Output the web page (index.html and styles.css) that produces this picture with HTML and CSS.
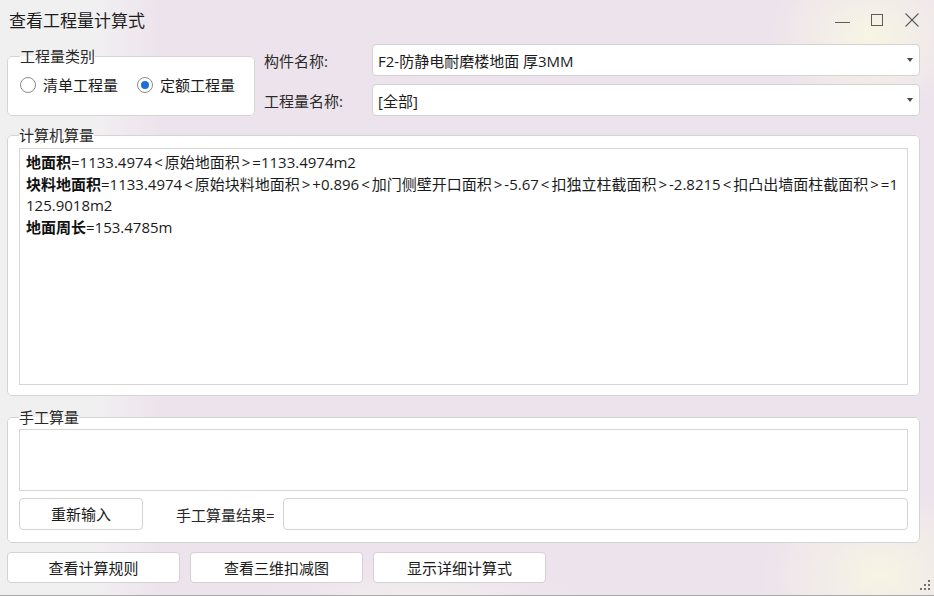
FILE: index.html
```html
<!DOCTYPE html>
<html lang="zh-CN">
<head>
<meta charset="utf-8">
<title>查看工程量计算式</title>
<link rel="stylesheet" href="styles.css">
</head>
<body>
<div class="window">
  <header class="titlebar">
    <span class="title">查看工程量计算式</span>
    <div class="controls">
      <svg class="ctl" width="16" height="16" viewBox="0 0 16 16"><line x1="1" y1="10.5" x2="16" y2="10.5" stroke="#5c5c5c" stroke-width="1"/></svg>
      <svg class="ctl" width="16" height="16" viewBox="0 0 16 16"><rect x="2.5" y="2.5" width="11" height="11" fill="none" stroke="#5c5c5c" stroke-width="1"/></svg>
      <svg class="ctl" width="16" height="16" viewBox="0 0 16 16"><path d="M1.5 1.5 L14.5 14.5 M14.5 1.5 L1.5 14.5" fill="none" stroke="#5c5c5c" stroke-width="1.1"/></svg>
    </div>
  </header>

  <div class="top">
    <fieldset class="group type">
      <legend>工程量类别</legend>
      <div class="radios">
        <span class="radio"><span class="dot"></span>清单工程量</span>
        <span class="radio checked"><span class="dot"></span>定额工程量</span>
      </div>
    </fieldset>
    <div class="fields">
      <div class="field">
        <span class="field-label">构件名称:</span>
        <div class="combo"><span>F2-防静电耐磨楼地面 厚3MM</span><span class="arrow"></span></div>
      </div>
      <div class="field">
        <span class="field-label">工程量名称:</span>
        <div class="combo"><span>[全部]</span><span class="arrow"></span></div>
      </div>
    </div>
  </div>

  <fieldset class="group calc">
    <legend>计算机算量</legend>
    <div class="output">
      <b>地面积</b>=1133.4974<span class="ang">&lt;</span>原始地面积<span class="ang">&gt;</span>=1133.4974m2<br>
      <b>块料地面积</b>=1133.4974<span class="ang">&lt;</span>原始块料地面积<span class="ang">&gt;</span>+0.896<span class="ang">&lt;</span>加门侧壁开口面积<span class="ang">&gt;</span>-5.67<span class="ang">&lt;</span>扣独立柱截面积<span class="ang">&gt;</span>-2.8215<span class="ang">&lt;</span>扣凸出墙面柱截面积<span class="ang">&gt;</span>=1<br>
      125.9018m2<br>
      <b>地面周长</b>=153.4785m
    </div>
  </fieldset>

  <fieldset class="group manual">
    <legend>手工算量</legend>
    <div class="manual-input"></div>
    <div class="manual-row">
      <button class="btn reset">重新输入</button>
      <span class="result-label">手工算量结果=</span>
      <div class="result-input"></div>
    </div>
  </fieldset>

  <div class="actions">
    <button class="btn action">查看计算规则</button>
    <button class="btn action">查看三维扣减图</button>
    <button class="btn action">显示详细计算式</button>
  </div>

  <svg class="grip" width="10" height="10" viewBox="0 0 10 10">
    <rect x="8" y="0" width="2" height="2" fill="#6f6f6f"/>
    <rect x="4" y="4" width="2" height="2" fill="#6f6f6f"/>
    <rect x="8" y="4" width="2" height="2" fill="#6f6f6f"/>
    <rect x="0" y="8" width="2" height="2" fill="#6f6f6f"/>
    <rect x="4" y="8" width="2" height="2" fill="#6f6f6f"/>
    <rect x="8" y="8" width="2" height="2" fill="#6f6f6f"/>
  </svg>
</div>
</body>
</html>
```

FILE: styles.css
```css
* { box-sizing: border-box; }

html, body {
  margin: 0;
  padding: 0;
}

body {
  width: 934px;
  height: 596px;
  overflow: hidden;
  font-family: "Open Sans", "Noto Sans CJK SC", sans-serif;
  font-size: 15px;
  color: #1b1b1b;
}

.window {
  position: relative;
  height: 596px;
  padding: 0 14px 0 7px;
  display: flex;
  flex-direction: column;
  border-bottom: 1px solid #a8a8a8;
  background:
    radial-gradient(ellipse 100px 80px at 870px 35px, rgba(248, 246, 228, 0.95), rgba(248, 246, 228, 0)),
    radial-gradient(ellipse 120px 90px at 880px 575px, rgba(247, 245, 228, 0.95), rgba(247, 245, 228, 0)),
    radial-gradient(ellipse 160px 40px at 420px 600px, rgba(243, 240, 238, 0.8), rgba(243, 240, 238, 0)),
    linear-gradient(to right, #f1f0f1 0px, #f1f0f1 95px, rgba(241, 240, 241, 0) 160px),
    #ede3ec;
}

.titlebar {
  height: 44px;
  display: flex;
  justify-content: space-between;
  align-items: flex-start;
}

.title {
  font-size: 17px;
  line-height: 24px;
  margin: 9px 0 0 2px;
  color: #1c1c1c;
}

.controls {
  display: flex;
  margin-top: 12px;
}

.ctl { display: block; }
.ctl + .ctl { margin-left: 19px; }

.group {
  margin: 0;
  border: 1px solid #d4d4d4;
  border-radius: 5px;
  background: #fff;
  min-width: 0;
}

.group legend {
  padding: 0;
  font-size: 15px;
  line-height: 18px;
  color: #2a2a2a;
}

.top {
  display: flex;
  height: 72px;
}

.type {
  width: 248px;
  height: 69px;
  margin-top: 3px;
  padding: 0 12px;
}

.radios {
  display: flex;
  align-items: center;
  height: 20px;
  margin-top: 10px;
}

.radio {
  display: flex;
  align-items: center;
  gap: 7px;
  line-height: 20px;
}

.radio + .radio { margin-left: 19px; }

.dot {
  width: 16px;
  height: 16px;
  border-radius: 50%;
  border: 1px solid #8d8d8d;
  background: #fff;
  display: flex;
  align-items: center;
  justify-content: center;
}

.checked .dot::after {
  content: "";
  width: 8px;
  height: 8px;
  border-radius: 50%;
  background: #1c6fd6;
}

.fields {
  flex: 1;
  margin-left: 9px;
  display: flex;
  flex-direction: column;
  gap: 8px;
}

.field {
  display: flex;
  align-items: center;
  height: 32px;
}

.field-label {
  width: 108px;
  color: #2a2a2a;
}

.combo {
  flex: 1;
  height: 32px;
  border: 1px solid #d3d3d3;
  border-radius: 4px;
  background: #fff;
  display: flex;
  align-items: center;
  justify-content: space-between;
  padding: 0 6px 0 5px;
  color: #1b1b1b;
}

.arrow {
  width: 0;
  height: 0;
  border-left: 3px solid transparent;
  border-right: 3px solid transparent;
  border-top: 4px solid #4a4a4a;
}

.calc {
  height: 270px;
  margin-top: 10px;
  padding: 0 11px 10px;
}

.output {
  height: 237px;
  margin-top: 4px;
  border: 1px solid #d6d6d6;
  background: #fff;
  padding: 3px 6px;
  line-height: 21.6px;
  white-space: nowrap;
  color: #1b1b1b;
}

.output b { font-weight: 700; color: #111; }

.ang { margin: 0 2px; }

.manual {
  height: 135px;
  margin-top: 12px;
  padding: 0 11px;
}

.manual-input {
  height: 62px;
  margin-top: 3px;
  border: 1px solid #d6d6d6;
  background: #fff;
}

.manual-row {
  display: flex;
  align-items: center;
  margin-top: 7px;
  height: 32px;
}

.btn {
  font: inherit;
  color: #1b1b1b;
  background: #fff;
  border: 1px solid #d3d3d3;
  border-radius: 4px;
  padding: 0;
  line-height: 20px;
}

.reset {
  width: 124px;
  height: 32px;
}

.result-label {
  margin-left: 33px;
  color: #2a2a2a;
}

.result-input {
  flex: 1;
  height: 32px;
  margin-left: 8px;
  border: 1px solid #d3d3d3;
  border-radius: 4px;
  background: #fff;
}

.actions {
  display: flex;
  gap: 10px;
  margin-top: 9px;
}

.action {
  width: 173px;
  height: 31px;
}

.grip {
  position: absolute;
  right: 4px;
  bottom: 5px;
}
```
